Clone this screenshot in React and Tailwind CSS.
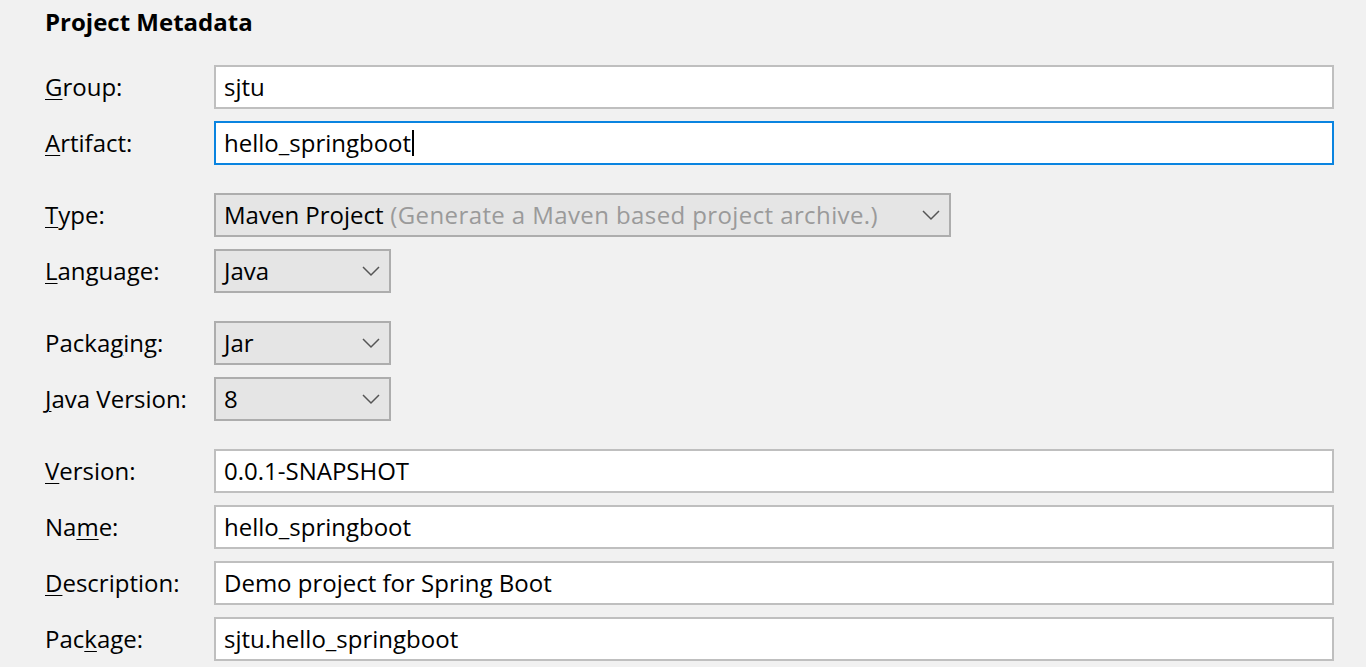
import React from "react";

const FONT = { fontFamily: '"Open Sans", "Noto Sans", sans-serif' };

function Label({ before, mn, after }) {
    return (
        <div className="text-[24px] text-black leading-none">
            {before}
            <span className="underline underline-offset-[3px] decoration-1">{mn}</span>
            {after}
        </div>
    );
}

function TextField({ value, focused }) {
    return (
        <div
            className={
                "h-[44px] bg-white border-2 flex items-center pl-[8px] pr-[9px] text-[24px] text-black " +
                (focused ? "border-[#0a84e0]" : "border-[#bfbfbf]")
            }
        >
            <span>{value}</span>
            {focused && <span className="w-[2px] h-[26px] bg-black ml-[1px]"></span>}
        </div>
    );
}

function Chevron() {
    return (
        <svg width="20" height="12" viewBox="0 0 20 12" className="shrink-0">
            <polyline points="2,2 10,10 18,2" fill="none" stroke="#555" strokeWidth="1.5" />
        </svg>
    );
}

function Select({ value, hint, width }) {
    return (
        <div
            className={
                "h-[44px] bg-[#e5e5e5] border-2 border-[#adadad] flex items-center justify-between pl-[8px] pr-[8px] text-[24px] text-black " +
                width
            }
        >
            <span className="whitespace-nowrap">
                {value}
                {hint && <span className="text-[#9a9a9a] tracking-[0.4px]"> {hint}</span>}
            </span>
            <Chevron />
        </div>
    );
}

function Row({ label, children }) {
    return (
        <div className="grid grid-cols-[169px_1fr] items-center">
            {label}
            <div>{children}</div>
        </div>
    );
}

export default function App() {
    return (
        <div className="w-[1366px] h-[667px] bg-[#f1f1f1] overflow-hidden pl-[45px] pr-[32px]" style={FONT}>
            <h1 className="text-[24px] font-bold text-black pt-[4px] h-[65px]">Project Metadata</h1>

            <div className="flex flex-col gap-[12px]">
                <Row label={<Label mn="G" after="roup:" />}>
                    <TextField value="sjtu" />
                </Row>
                <Row label={<Label mn="A" after="rtifact:" />}>
                    <TextField value="hello_springboot" focused />
                </Row>
            </div>

            <div className="flex flex-col gap-[12px] mt-[28px]">
                <Row label={<Label mn="T" after="ype:" />}>
                    <Select value="Maven Project" hint="(Generate a Maven based project archive.)" width="w-[737px]" />
                </Row>
                <Row label={<Label mn="L" after="anguage:" />}>
                    <Select value="Java" width="w-[177px]" />
                </Row>
            </div>

            <div className="flex flex-col gap-[12px] mt-[28px]">
                <Row label={<Label before="Packa" mn="g" after="ing:" />}>
                    <Select value="Jar" width="w-[177px]" />
                </Row>
                <Row label={<Label mn="J" after="ava Version:" />}>
                    <Select value="8" width="w-[177px]" />
                </Row>
            </div>

            <div className="flex flex-col gap-[12px] mt-[28px]">
                <Row label={<Label mn="V" after="ersion:" />}>
                    <TextField value="0.0.1-SNAPSHOT" />
                </Row>
                <Row label={<Label before="Na" mn="m" after="e:" />}>
                    <TextField value="hello_springboot" />
                </Row>
                <Row label={<Label mn="D" after="escription:" />}>
                    <TextField value="Demo project for Spring Boot" />
                </Row>
                <Row label={<Label before="Pac" mn="k" after="age:" />}>
                    <TextField value="sjtu.hello_springboot" />
                </Row>
            </div>
        </div>
    );
}
